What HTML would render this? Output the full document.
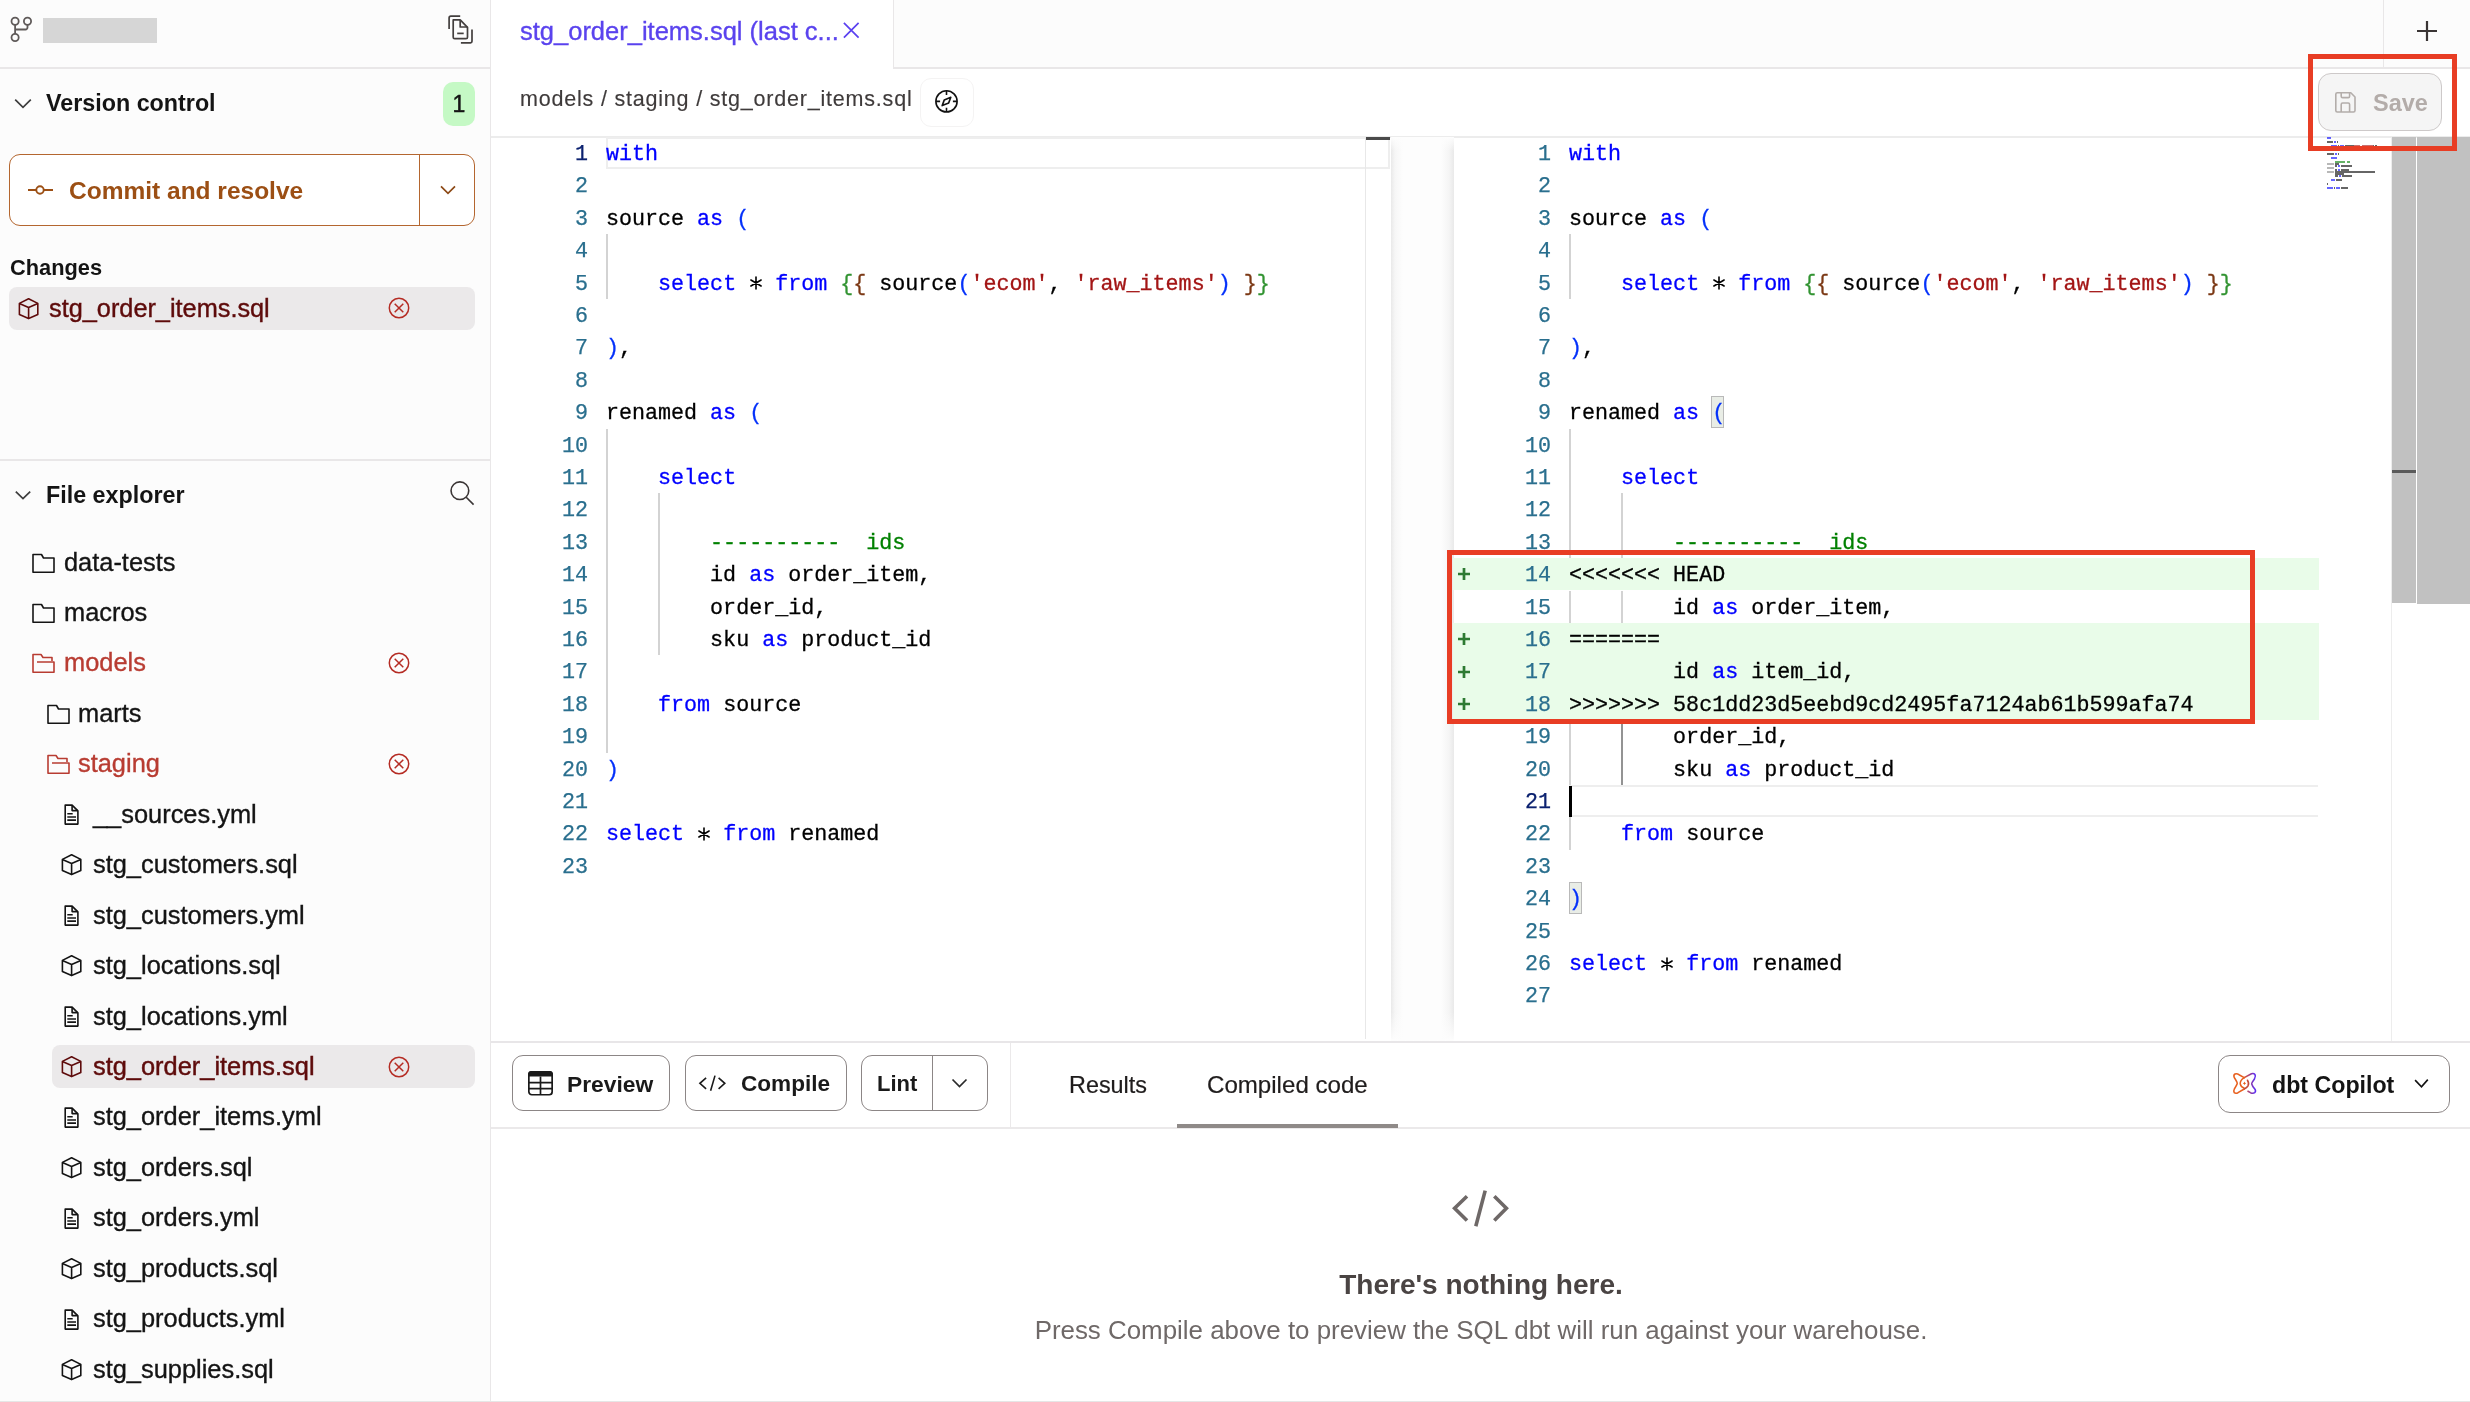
<!DOCTYPE html><html><head><meta charset="utf-8"><style>
html,body{margin:0;padding:0;width:2470px;height:1402px;overflow:hidden;background:#fff;}
.t{position:absolute;white-space:pre;will-change:transform;}
.r{position:absolute;box-sizing:border-box;}
</style></head><body>
<div class="r" style="left:0px;top:0px;width:490px;height:1402px;background:#fcfcfc"></div>
<div class="r" style="left:490px;top:0px;width:1px;height:1402px;background:#e9e7e8"></div>
<svg class="r" style="left:8px;top:14px" width="30" height="32" viewBox="0 0 30 32" fill="none"><g stroke="#5f5a59" stroke-width="1.8"><circle cx="7.1" cy="7.3" r="3.6"/><circle cx="19.5" cy="7.3" r="3.6"/><circle cx="7.1" cy="23.5" r="3.6"/><path d="M7.1 10.9 V19.9 M7.1 15.5 H17.5 Q19.3 15.5 19.5 13.5 V10.9"/></g></svg>
<div class="r" style="left:43px;top:18px;width:114px;height:25px;background:#d6d6d6"></div>
<svg class="r" style="left:440px;top:10px" width="40" height="40" viewBox="0 0 40 40" fill="none"><g stroke="#433f3e" stroke-width="1.7" stroke-linejoin="round" stroke-linecap="butt"><path d="M20.2 6.05 H10.9 Q9.1 6.05 9.1 7.9 V19.1"/><path d="M13.2 9.9 H20.2 L27.5 17.3 V27.2 Q27.5 28.7 26 28.7 H14.7 Q13.2 28.7 13.2 27.2 Z"/><path d="M20.2 9.9 V17 H27.5"/><path d="M17.2 23.4 H23.7"/><path d="M32 19.5 V31.3 Q32 32.8 30.5 32.8 H20.9"/></g></svg>
<div class="r" style="left:0px;top:67px;width:490px;height:1.5px;background:#e9e7e8"></div>
<svg class="r" style="left:13px;top:96px" width="20" height="16" viewBox="0 0 20 16" fill="none"><path d="M2.2 3.7 L10 11.4 L17.8 3.7" stroke="#3d3d3d" stroke-width="1.7" fill="none"/></svg>
<div class="t" style="left:46.00px;top:90.34px;font-size:23.3px;line-height:27.96px;color:#141414;font-weight:bold;font-family:'Liberation Sans', sans-serif;">Version control</div>
<div class="r" style="left:443px;top:82px;width:32px;height:44px;background:#c5f9c5;border-radius:10px"></div>
<div class="t" style="left:-541.00px;width:2000px;text-align:center;top:91.23px;font-size:23px;line-height:27.60px;color:#141414;font-weight:normal;font-family:'Liberation Sans', sans-serif;-webkit-text-stroke:0.5px #141414">1</div>
<div class="r" style="left:9px;top:154px;width:466px;height:72px;background:#fff;border:1.5px solid #b4662f;border-radius:11px"></div>
<div class="r" style="left:419px;top:154px;width:1px;height:72px;background:#b4662f"></div>
<svg class="r" style="left:26px;top:180px" width="30" height="20" viewBox="0 0 30 20" fill="none"><g stroke="#9c4f14" stroke-width="1.9"><path d="M2 10 H10.2 M17.8 10 H27"/><circle cx="14" cy="10" r="3.7"/></g></svg>
<div class="t" style="left:68.50px;top:175.81px;font-size:24.5px;line-height:29.40px;color:#9c4f14;font-weight:bold;font-family:'Liberation Sans', sans-serif;">Commit and resolve</div>
<svg class="r" style="left:437px;top:182px" width="22" height="16" viewBox="0 0 22 16" fill="none"><path d="M4 4.3 L11 11.3 L18 4.3" stroke="#8d4a17" stroke-width="1.7" fill="none"/></svg>
<div class="t" style="left:9.60px;top:255.36px;font-size:21.8px;line-height:26.16px;color:#141414;font-weight:bold;font-family:'Liberation Sans', sans-serif;">Changes</div>
<div class="r" style="left:9px;top:287px;width:466px;height:43px;background:#ebe9ea;border-radius:8px"></div>
<svg class="r" style="left:18px;top:298px" width="22" height="22" viewBox="0 0 22 22" fill="none"><g stroke="#5e0b0b" stroke-width="1.6" stroke-linejoin="round"><path d="M10.6 0.8 L19.8 5.4 V16.6 L10.6 20.6 L1.4 16.6 V5.4 Z"/><path d="M1.4 5.4 L10.6 9.4 L19.8 5.4 M10.6 9.4 V20.6"/></g></svg>
<div class="t" style="left:49.30px;top:293.05px;font-size:25.3px;line-height:30.36px;color:#5e0b0b;font-weight:normal;font-family:'Liberation Sans', sans-serif;-webkit-text-stroke:0.4px #5e0b0b">stg_order_items.sql</div>
<svg class="r" style="left:387.3px;top:296.2px" width="24" height="24" viewBox="0 0 24 24" fill="none"><g stroke="#b52c24" stroke-width="1.5"><circle cx="12" cy="12" r="9.7"/><path d="M7.7 7.7 L16.3 16.3 M16.3 7.7 L7.7 16.3"/></g></svg>
<div class="r" style="left:0px;top:459px;width:490px;height:1.5px;background:#e9e7e8"></div>
<svg class="r" style="left:13px;top:488px" width="20" height="16" viewBox="0 0 20 16" fill="none"><path d="M2.8 3.6 L10 10.6 L17.2 3.6" stroke="#3d3d3d" stroke-width="1.7" fill="none"/></svg>
<div class="t" style="left:46.20px;top:482.34px;font-size:23.3px;line-height:27.96px;color:#141414;font-weight:bold;font-family:'Liberation Sans', sans-serif;">File explorer</div>
<svg class="r" style="left:444px;top:476px" width="34" height="34" viewBox="0 0 34 34" fill="none"><g stroke="#3a3535" stroke-width="1.6"><circle cx="15.9" cy="14.7" r="8.85"/><path d="M22.2 21.2 L29.6 28.6"/></g></svg>
<svg class="r" style="left:31px;top:551.5px" width="25" height="23" viewBox="0 0 25 23" fill="none"><path d="M2 2.5 H10.5 L12.5 6 H23 V20.2 H2 Z" stroke="#141414" stroke-width="1.6" stroke-linejoin="round"/></svg>
<div class="t" style="left:63.80px;top:546.55px;font-size:25.4px;line-height:30.48px;color:#141414;font-weight:normal;font-family:'Liberation Sans', sans-serif;-webkit-text-stroke:0.35px #141414">data-tests</div>
<svg class="r" style="left:31px;top:601.94px" width="25" height="23" viewBox="0 0 25 23" fill="none"><path d="M2 2.5 H10.5 L12.5 6 H23 V20.2 H2 Z" stroke="#141414" stroke-width="1.6" stroke-linejoin="round"/></svg>
<div class="t" style="left:63.80px;top:596.99px;font-size:25.4px;line-height:30.48px;color:#141414;font-weight:normal;font-family:'Liberation Sans', sans-serif;-webkit-text-stroke:0.35px #141414">macros</div>
<svg class="r" style="left:31px;top:652.38px" width="25" height="23" viewBox="0 0 25 23" fill="none"><path d="M6 10 H23 V20.2 H2 V2.5 H10 L12 5.5 H21 V9" stroke="#b83c32" stroke-width="1.6" stroke-linejoin="round"/></svg>
<div class="t" style="left:63.80px;top:647.43px;font-size:25.4px;line-height:30.48px;color:#b83c32;font-weight:normal;font-family:'Liberation Sans', sans-serif;-webkit-text-stroke:0.35px #b83c32">models</div>
<svg class="r" style="left:387.3px;top:651.38px" width="24" height="24" viewBox="0 0 24 24" fill="none"><g stroke="#b52c24" stroke-width="1.5"><circle cx="12" cy="12" r="9.7"/><path d="M7.7 7.7 L16.3 16.3 M16.3 7.7 L7.7 16.3"/></g></svg>
<svg class="r" style="left:46px;top:702.8199999999999px" width="25" height="23" viewBox="0 0 25 23" fill="none"><path d="M2 2.5 H10.5 L12.5 6 H23 V20.2 H2 Z" stroke="#141414" stroke-width="1.6" stroke-linejoin="round"/></svg>
<div class="t" style="left:78.00px;top:697.87px;font-size:25.4px;line-height:30.48px;color:#141414;font-weight:normal;font-family:'Liberation Sans', sans-serif;-webkit-text-stroke:0.35px #141414">marts</div>
<svg class="r" style="left:46px;top:753.26px" width="25" height="23" viewBox="0 0 25 23" fill="none"><path d="M6 10 H23 V20.2 H2 V2.5 H10 L12 5.5 H21 V9" stroke="#b83c32" stroke-width="1.6" stroke-linejoin="round"/></svg>
<div class="t" style="left:78.00px;top:748.31px;font-size:25.4px;line-height:30.48px;color:#b83c32;font-weight:normal;font-family:'Liberation Sans', sans-serif;-webkit-text-stroke:0.35px #b83c32">staging</div>
<svg class="r" style="left:387.3px;top:752.26px" width="24" height="24" viewBox="0 0 24 24" fill="none"><g stroke="#b52c24" stroke-width="1.5"><circle cx="12" cy="12" r="9.7"/><path d="M7.7 7.7 L16.3 16.3 M16.3 7.7 L7.7 16.3"/></g></svg>
<svg class="r" style="left:63px;top:803.1px" width="18" height="23" viewBox="0 0 18 23" fill="none"><g stroke="#141414" stroke-width="1.6" stroke-linejoin="round"><path d="M2.2 2.1 H9.1 L14.9 7.9 V21.1 H2.2 Z"/><path d="M9.1 2.1 V7.6 H14.9"/><path d="M4.3 10.7 H9.7 M4.3 14 H13 M4.3 17.1 H13"/></g></svg>
<div class="t" style="left:92.50px;top:798.75px;font-size:25.4px;line-height:30.48px;color:#141414;font-weight:normal;font-family:'Liberation Sans', sans-serif;-webkit-text-stroke:0.35px #141414">__sources.yml</div>
<svg class="r" style="left:61px;top:854.34px" width="22" height="22" viewBox="0 0 22 22" fill="none"><g stroke="#141414" stroke-width="1.6" stroke-linejoin="round"><path d="M10.6 0.8 L19.8 5.4 V16.6 L10.6 20.6 L1.4 16.6 V5.4 Z"/><path d="M1.4 5.4 L10.6 9.4 L19.8 5.4 M10.6 9.4 V20.6"/></g></svg>
<div class="t" style="left:92.50px;top:849.19px;font-size:25.4px;line-height:30.48px;color:#141414;font-weight:normal;font-family:'Liberation Sans', sans-serif;-webkit-text-stroke:0.35px #141414">stg_customers.sql</div>
<svg class="r" style="left:63px;top:903.9799999999999px" width="18" height="23" viewBox="0 0 18 23" fill="none"><g stroke="#141414" stroke-width="1.6" stroke-linejoin="round"><path d="M2.2 2.1 H9.1 L14.9 7.9 V21.1 H2.2 Z"/><path d="M9.1 2.1 V7.6 H14.9"/><path d="M4.3 10.7 H9.7 M4.3 14 H13 M4.3 17.1 H13"/></g></svg>
<div class="t" style="left:92.50px;top:899.63px;font-size:25.4px;line-height:30.48px;color:#141414;font-weight:normal;font-family:'Liberation Sans', sans-serif;-webkit-text-stroke:0.35px #141414">stg_customers.yml</div>
<svg class="r" style="left:61px;top:955.22px" width="22" height="22" viewBox="0 0 22 22" fill="none"><g stroke="#141414" stroke-width="1.6" stroke-linejoin="round"><path d="M10.6 0.8 L19.8 5.4 V16.6 L10.6 20.6 L1.4 16.6 V5.4 Z"/><path d="M1.4 5.4 L10.6 9.4 L19.8 5.4 M10.6 9.4 V20.6"/></g></svg>
<div class="t" style="left:92.50px;top:950.07px;font-size:25.4px;line-height:30.48px;color:#141414;font-weight:normal;font-family:'Liberation Sans', sans-serif;-webkit-text-stroke:0.35px #141414">stg_locations.sql</div>
<svg class="r" style="left:63px;top:1004.86px" width="18" height="23" viewBox="0 0 18 23" fill="none"><g stroke="#141414" stroke-width="1.6" stroke-linejoin="round"><path d="M2.2 2.1 H9.1 L14.9 7.9 V21.1 H2.2 Z"/><path d="M9.1 2.1 V7.6 H14.9"/><path d="M4.3 10.7 H9.7 M4.3 14 H13 M4.3 17.1 H13"/></g></svg>
<div class="t" style="left:92.50px;top:1000.51px;font-size:25.4px;line-height:30.48px;color:#141414;font-weight:normal;font-family:'Liberation Sans', sans-serif;-webkit-text-stroke:0.35px #141414">stg_locations.yml</div>
<div class="r" style="left:52px;top:1045px;width:423px;height:43px;background:#ebe9ea;border-radius:8px"></div>
<svg class="r" style="left:61px;top:1056.1000000000001px" width="22" height="22" viewBox="0 0 22 22" fill="none"><g stroke="#5e0b0b" stroke-width="1.6" stroke-linejoin="round"><path d="M10.6 0.8 L19.8 5.4 V16.6 L10.6 20.6 L1.4 16.6 V5.4 Z"/><path d="M1.4 5.4 L10.6 9.4 L19.8 5.4 M10.6 9.4 V20.6"/></g></svg>
<div class="t" style="left:92.50px;top:1050.95px;font-size:25.4px;line-height:30.48px;color:#5e0b0b;font-weight:normal;font-family:'Liberation Sans', sans-serif;-webkit-text-stroke:0.45px #5e0b0b">stg_order_items.sql</div>
<svg class="r" style="left:387.3px;top:1054.9px" width="24" height="24" viewBox="0 0 24 24" fill="none"><g stroke="#b52c24" stroke-width="1.5"><circle cx="12" cy="12" r="9.7"/><path d="M7.7 7.7 L16.3 16.3 M16.3 7.7 L7.7 16.3"/></g></svg>
<svg class="r" style="left:63px;top:1105.74px" width="18" height="23" viewBox="0 0 18 23" fill="none"><g stroke="#141414" stroke-width="1.6" stroke-linejoin="round"><path d="M2.2 2.1 H9.1 L14.9 7.9 V21.1 H2.2 Z"/><path d="M9.1 2.1 V7.6 H14.9"/><path d="M4.3 10.7 H9.7 M4.3 14 H13 M4.3 17.1 H13"/></g></svg>
<div class="t" style="left:92.50px;top:1101.39px;font-size:25.4px;line-height:30.48px;color:#141414;font-weight:normal;font-family:'Liberation Sans', sans-serif;-webkit-text-stroke:0.35px #141414">stg_order_items.yml</div>
<svg class="r" style="left:61px;top:1156.98px" width="22" height="22" viewBox="0 0 22 22" fill="none"><g stroke="#141414" stroke-width="1.6" stroke-linejoin="round"><path d="M10.6 0.8 L19.8 5.4 V16.6 L10.6 20.6 L1.4 16.6 V5.4 Z"/><path d="M1.4 5.4 L10.6 9.4 L19.8 5.4 M10.6 9.4 V20.6"/></g></svg>
<div class="t" style="left:92.50px;top:1151.83px;font-size:25.4px;line-height:30.48px;color:#141414;font-weight:normal;font-family:'Liberation Sans', sans-serif;-webkit-text-stroke:0.35px #141414">stg_orders.sql</div>
<svg class="r" style="left:63px;top:1206.6200000000001px" width="18" height="23" viewBox="0 0 18 23" fill="none"><g stroke="#141414" stroke-width="1.6" stroke-linejoin="round"><path d="M2.2 2.1 H9.1 L14.9 7.9 V21.1 H2.2 Z"/><path d="M9.1 2.1 V7.6 H14.9"/><path d="M4.3 10.7 H9.7 M4.3 14 H13 M4.3 17.1 H13"/></g></svg>
<div class="t" style="left:92.50px;top:1202.27px;font-size:25.4px;line-height:30.48px;color:#141414;font-weight:normal;font-family:'Liberation Sans', sans-serif;-webkit-text-stroke:0.35px #141414">stg_orders.yml</div>
<svg class="r" style="left:61px;top:1257.86px" width="22" height="22" viewBox="0 0 22 22" fill="none"><g stroke="#141414" stroke-width="1.6" stroke-linejoin="round"><path d="M10.6 0.8 L19.8 5.4 V16.6 L10.6 20.6 L1.4 16.6 V5.4 Z"/><path d="M1.4 5.4 L10.6 9.4 L19.8 5.4 M10.6 9.4 V20.6"/></g></svg>
<div class="t" style="left:92.50px;top:1252.71px;font-size:25.4px;line-height:30.48px;color:#141414;font-weight:normal;font-family:'Liberation Sans', sans-serif;-webkit-text-stroke:0.35px #141414">stg_products.sql</div>
<svg class="r" style="left:63px;top:1307.5px" width="18" height="23" viewBox="0 0 18 23" fill="none"><g stroke="#141414" stroke-width="1.6" stroke-linejoin="round"><path d="M2.2 2.1 H9.1 L14.9 7.9 V21.1 H2.2 Z"/><path d="M9.1 2.1 V7.6 H14.9"/><path d="M4.3 10.7 H9.7 M4.3 14 H13 M4.3 17.1 H13"/></g></svg>
<div class="t" style="left:92.50px;top:1303.15px;font-size:25.4px;line-height:30.48px;color:#141414;font-weight:normal;font-family:'Liberation Sans', sans-serif;-webkit-text-stroke:0.35px #141414">stg_products.yml</div>
<svg class="r" style="left:61px;top:1358.74px" width="22" height="22" viewBox="0 0 22 22" fill="none"><g stroke="#141414" stroke-width="1.6" stroke-linejoin="round"><path d="M10.6 0.8 L19.8 5.4 V16.6 L10.6 20.6 L1.4 16.6 V5.4 Z"/><path d="M1.4 5.4 L10.6 9.4 L19.8 5.4 M10.6 9.4 V20.6"/></g></svg>
<div class="t" style="left:92.50px;top:1353.59px;font-size:25.4px;line-height:30.48px;color:#141414;font-weight:normal;font-family:'Liberation Sans', sans-serif;-webkit-text-stroke:0.35px #141414">stg_supplies.sql</div>
<div class="r" style="left:491px;top:0px;width:1979px;height:67px;background:#fcfcfc"></div>
<div class="r" style="left:491px;top:0px;width:402px;height:67px;background:#fff"></div>
<div class="r" style="left:893px;top:0px;width:1px;height:67px;background:#e9e7e8"></div>
<div class="r" style="left:893px;top:67px;width:1577px;height:1.5px;background:#e9e7e8"></div>
<div class="r" style="left:2383px;top:0px;width:1px;height:67px;background:#e9e7e8"></div>
<div class="t" style="left:520.00px;top:15.66px;font-size:25.5px;line-height:30.60px;color:#5a43ee;font-weight:normal;font-family:'Liberation Sans', sans-serif;-webkit-text-stroke:0.35px #5a43ee">stg_order_items.sql (last c...</div>
<svg class="r" style="left:840px;top:20px" width="22" height="22" viewBox="0 0 22 22" fill="none"><path d="M3.9 2.9 L18.6 17.6 M18.6 2.9 L3.9 17.6" stroke="#5a40f0" stroke-width="1.7"/></svg>
<svg class="r" style="left:2412px;top:16px" width="30" height="30" viewBox="0 0 30 30" fill="none"><path d="M15 5 V25 M5 15 H25" stroke="#3a3535" stroke-width="2.2"/></svg>
<div class="t" style="left:520.00px;top:87.25px;font-size:21.5px;line-height:25.80px;color:#3f3b3b;font-weight:normal;font-family:'Liberation Sans', sans-serif;letter-spacing:0.8px;-webkit-text-stroke:0.15px #3f3b3b">models / staging / stg_order_items.sql</div>
<div class="r" style="left:920px;top:77.5px;width:54px;height:49px;border:1px solid #f4f3f3;border-radius:11px;background:#fff"></div>
<svg class="r" style="left:932px;top:87px" width="30" height="30" viewBox="0 0 30 30" fill="none"><g stroke="#111" stroke-width="1.6" fill="none"><circle cx="14.5" cy="14.4" r="10.6"/><path d="M14.5 3.8 V8 M14.5 20.8 V25 M3.9 14.4 H8.1 M20.9 14.4 H25.1"/><path d="M18.8 10.3 L16.7 15.9 L10.2 18.6 L12.3 12.9 Z" stroke-linejoin="round"/></g></svg>
<div class="r" style="left:2318px;top:73px;width:124px;height:58px;background:#f5f5f5;border:1.5px solid #cdc9c9;border-radius:13px"></div>
<svg class="r" style="left:2332px;top:88px" width="28" height="28" viewBox="0 0 28 28" fill="none"><g stroke="#b3adaa" stroke-width="1.6" fill="none" stroke-linejoin="round"><path d="M5.3 4.7 H18.8 L23 9 V22.5 Q23 24 21.5 24 H5.3 Q3.8 24 3.8 22.5 V6.2 Q3.8 4.7 5.3 4.7 Z"/><path d="M9.2 4.7 V8.2 Q9.2 9.6 10.6 9.6 H16.2 Q17.6 9.6 17.6 8.2 V4.7"/><path d="M9.2 24 V16.4 Q9.2 15 10.6 15 H16.2 Q17.6 15 17.6 16.4 V24"/></g></svg>
<div class="t" style="left:2372.70px;top:88.75px;font-size:23.5px;line-height:28.20px;color:#b3aca9;font-weight:bold;font-family:'Liberation Sans', sans-serif;">Save</div>
<div class="r" style="left:491px;top:136px;width:1979px;height:2px;background:#ececec"></div>
<div class="r" style="left:606px;top:137px;width:784px;height:32px;border:2px solid #eeeeee"></div>
<div class="r" style="left:606px;top:234.2px;width:2px;height:64.8px;background:#d3d3d3"></div>
<div class="r" style="left:606px;top:428.59999999999997px;width:2px;height:324.0px;background:#d3d3d3"></div>
<div class="r" style="left:658px;top:493.4px;width:2px;height:162.0px;background:#d3d3d3"></div>
<div class="t" style="left:388px;width:200px;text-align:right;top:139.03px;font:21.7px/32.4px 'Liberation Mono', monospace;color:#0b216f;letter-spacing:-0.002px;-webkit-text-stroke:0.25px #0b216f">1</div>
<div class="t" style="left:388px;width:200px;text-align:right;top:171.43px;font:21.7px/32.4px 'Liberation Mono', monospace;color:#2a6f8e;letter-spacing:-0.002px;-webkit-text-stroke:0.25px #2a6f8e">2</div>
<div class="t" style="left:388px;width:200px;text-align:right;top:203.83px;font:21.7px/32.4px 'Liberation Mono', monospace;color:#2a6f8e;letter-spacing:-0.002px;-webkit-text-stroke:0.25px #2a6f8e">3</div>
<div class="t" style="left:388px;width:200px;text-align:right;top:236.23px;font:21.7px/32.4px 'Liberation Mono', monospace;color:#2a6f8e;letter-spacing:-0.002px;-webkit-text-stroke:0.25px #2a6f8e">4</div>
<div class="t" style="left:388px;width:200px;text-align:right;top:268.63px;font:21.7px/32.4px 'Liberation Mono', monospace;color:#2a6f8e;letter-spacing:-0.002px;-webkit-text-stroke:0.25px #2a6f8e">5</div>
<div class="t" style="left:388px;width:200px;text-align:right;top:301.03px;font:21.7px/32.4px 'Liberation Mono', monospace;color:#2a6f8e;letter-spacing:-0.002px;-webkit-text-stroke:0.25px #2a6f8e">6</div>
<div class="t" style="left:388px;width:200px;text-align:right;top:333.43px;font:21.7px/32.4px 'Liberation Mono', monospace;color:#2a6f8e;letter-spacing:-0.002px;-webkit-text-stroke:0.25px #2a6f8e">7</div>
<div class="t" style="left:388px;width:200px;text-align:right;top:365.83px;font:21.7px/32.4px 'Liberation Mono', monospace;color:#2a6f8e;letter-spacing:-0.002px;-webkit-text-stroke:0.25px #2a6f8e">8</div>
<div class="t" style="left:388px;width:200px;text-align:right;top:398.23px;font:21.7px/32.4px 'Liberation Mono', monospace;color:#2a6f8e;letter-spacing:-0.002px;-webkit-text-stroke:0.25px #2a6f8e">9</div>
<div class="t" style="left:388px;width:200px;text-align:right;top:430.63px;font:21.7px/32.4px 'Liberation Mono', monospace;color:#2a6f8e;letter-spacing:-0.002px;-webkit-text-stroke:0.25px #2a6f8e">10</div>
<div class="t" style="left:388px;width:200px;text-align:right;top:463.03px;font:21.7px/32.4px 'Liberation Mono', monospace;color:#2a6f8e;letter-spacing:-0.002px;-webkit-text-stroke:0.25px #2a6f8e">11</div>
<div class="t" style="left:388px;width:200px;text-align:right;top:495.43px;font:21.7px/32.4px 'Liberation Mono', monospace;color:#2a6f8e;letter-spacing:-0.002px;-webkit-text-stroke:0.25px #2a6f8e">12</div>
<div class="t" style="left:388px;width:200px;text-align:right;top:527.83px;font:21.7px/32.4px 'Liberation Mono', monospace;color:#2a6f8e;letter-spacing:-0.002px;-webkit-text-stroke:0.25px #2a6f8e">13</div>
<div class="t" style="left:388px;width:200px;text-align:right;top:560.23px;font:21.7px/32.4px 'Liberation Mono', monospace;color:#2a6f8e;letter-spacing:-0.002px;-webkit-text-stroke:0.25px #2a6f8e">14</div>
<div class="t" style="left:388px;width:200px;text-align:right;top:592.63px;font:21.7px/32.4px 'Liberation Mono', monospace;color:#2a6f8e;letter-spacing:-0.002px;-webkit-text-stroke:0.25px #2a6f8e">15</div>
<div class="t" style="left:388px;width:200px;text-align:right;top:625.03px;font:21.7px/32.4px 'Liberation Mono', monospace;color:#2a6f8e;letter-spacing:-0.002px;-webkit-text-stroke:0.25px #2a6f8e">16</div>
<div class="t" style="left:388px;width:200px;text-align:right;top:657.43px;font:21.7px/32.4px 'Liberation Mono', monospace;color:#2a6f8e;letter-spacing:-0.002px;-webkit-text-stroke:0.25px #2a6f8e">17</div>
<div class="t" style="left:388px;width:200px;text-align:right;top:689.83px;font:21.7px/32.4px 'Liberation Mono', monospace;color:#2a6f8e;letter-spacing:-0.002px;-webkit-text-stroke:0.25px #2a6f8e">18</div>
<div class="t" style="left:388px;width:200px;text-align:right;top:722.23px;font:21.7px/32.4px 'Liberation Mono', monospace;color:#2a6f8e;letter-spacing:-0.002px;-webkit-text-stroke:0.25px #2a6f8e">19</div>
<div class="t" style="left:388px;width:200px;text-align:right;top:754.63px;font:21.7px/32.4px 'Liberation Mono', monospace;color:#2a6f8e;letter-spacing:-0.002px;-webkit-text-stroke:0.25px #2a6f8e">20</div>
<div class="t" style="left:388px;width:200px;text-align:right;top:787.03px;font:21.7px/32.4px 'Liberation Mono', monospace;color:#2a6f8e;letter-spacing:-0.002px;-webkit-text-stroke:0.25px #2a6f8e">21</div>
<div class="t" style="left:388px;width:200px;text-align:right;top:819.43px;font:21.7px/32.4px 'Liberation Mono', monospace;color:#2a6f8e;letter-spacing:-0.002px;-webkit-text-stroke:0.25px #2a6f8e">22</div>
<div class="t" style="left:388px;width:200px;text-align:right;top:851.83px;font:21.7px/32.4px 'Liberation Mono', monospace;color:#2a6f8e;letter-spacing:-0.002px;-webkit-text-stroke:0.25px #2a6f8e">23</div>
<div class="t" style="left:606px;top:139.03px;font:21.7px/32.4px 'Liberation Mono', monospace;letter-spacing:-0.002px;-webkit-text-stroke:0.3px currentColor"><span style="color:#0000ff;-webkit-text-stroke:0.3px #0000ff">with</span></div>
<div class="t" style="left:606px;top:203.83px;font:21.7px/32.4px 'Liberation Mono', monospace;letter-spacing:-0.002px;-webkit-text-stroke:0.3px currentColor"><span style="color:#000000;-webkit-text-stroke:0.3px #000000">source </span><span style="color:#0000ff;-webkit-text-stroke:0.3px #0000ff">as</span><span style="color:#000000;-webkit-text-stroke:0.3px #000000"> </span><span style="color:#0431fa;-webkit-text-stroke:0.3px #0431fa">(</span></div>
<svg class="r" style="left:747.73px;top:275.10px" width="16" height="16" viewBox="0 0 16 16"><path d="M8 2 V14 M2.9 5 L13.1 11 M2.9 11 L13.1 5" stroke="#000" stroke-width="1.6" stroke-linecap="round"/></svg>
<div class="t" style="left:606px;top:268.63px;font:21.7px/32.4px 'Liberation Mono', monospace;letter-spacing:-0.002px;-webkit-text-stroke:0.3px currentColor"><span style="color:#000000;-webkit-text-stroke:0.3px #000000">    </span><span style="color:#0000ff;-webkit-text-stroke:0.3px #0000ff">select</span><span style="color:#000000;-webkit-text-stroke:0.3px #000000">   </span><span style="color:#0000ff;-webkit-text-stroke:0.3px #0000ff">from</span><span style="color:#000000;-webkit-text-stroke:0.3px #000000"> </span><span style="color:#319331;-webkit-text-stroke:0.3px #319331">{</span><span style="color:#7b3814;-webkit-text-stroke:0.3px #7b3814">{</span><span style="color:#000000;-webkit-text-stroke:0.3px #000000"> source</span><span style="color:#0431fa;-webkit-text-stroke:0.3px #0431fa">(</span><span style="color:#a31515;-webkit-text-stroke:0.3px #a31515">&#x27;ecom&#x27;</span><span style="color:#000000;-webkit-text-stroke:0.3px #000000">, </span><span style="color:#a31515;-webkit-text-stroke:0.3px #a31515">&#x27;raw_items&#x27;</span><span style="color:#0431fa;-webkit-text-stroke:0.3px #0431fa">)</span><span style="color:#000000;-webkit-text-stroke:0.3px #000000"> </span><span style="color:#7b3814;-webkit-text-stroke:0.3px #7b3814">}</span><span style="color:#319331;-webkit-text-stroke:0.3px #319331">}</span></div>
<div class="t" style="left:606px;top:333.43px;font:21.7px/32.4px 'Liberation Mono', monospace;letter-spacing:-0.002px;-webkit-text-stroke:0.3px currentColor"><span style="color:#0431fa;-webkit-text-stroke:0.3px #0431fa">)</span><span style="color:#000000;-webkit-text-stroke:0.3px #000000">,</span></div>
<div class="t" style="left:606px;top:398.23px;font:21.7px/32.4px 'Liberation Mono', monospace;letter-spacing:-0.002px;-webkit-text-stroke:0.3px currentColor"><span style="color:#000000;-webkit-text-stroke:0.3px #000000">renamed </span><span style="color:#0000ff;-webkit-text-stroke:0.3px #0000ff">as</span><span style="color:#000000;-webkit-text-stroke:0.3px #000000"> </span><span style="color:#0431fa;-webkit-text-stroke:0.3px #0431fa">(</span></div>
<div class="t" style="left:606px;top:463.03px;font:21.7px/32.4px 'Liberation Mono', monospace;letter-spacing:-0.002px;-webkit-text-stroke:0.3px currentColor"><span style="color:#000000;-webkit-text-stroke:0.3px #000000">    </span><span style="color:#0000ff;-webkit-text-stroke:0.3px #0000ff">select</span></div>
<div class="t" style="left:606px;top:527.83px;font:21.7px/32.4px 'Liberation Mono', monospace;letter-spacing:-0.002px;-webkit-text-stroke:0.3px currentColor"><span style="color:#000000;-webkit-text-stroke:0.3px #000000">        </span><span style="color:#008000;-webkit-text-stroke:0.3px #008000">----------  ids</span></div>
<div class="t" style="left:606px;top:560.23px;font:21.7px/32.4px 'Liberation Mono', monospace;letter-spacing:-0.002px;-webkit-text-stroke:0.3px currentColor"><span style="color:#000000;-webkit-text-stroke:0.3px #000000">        id </span><span style="color:#0000ff;-webkit-text-stroke:0.3px #0000ff">as</span><span style="color:#000000;-webkit-text-stroke:0.3px #000000"> order_item,</span></div>
<div class="t" style="left:606px;top:592.63px;font:21.7px/32.4px 'Liberation Mono', monospace;letter-spacing:-0.002px;-webkit-text-stroke:0.3px currentColor"><span style="color:#000000;-webkit-text-stroke:0.3px #000000">        order_id,</span></div>
<div class="t" style="left:606px;top:625.03px;font:21.7px/32.4px 'Liberation Mono', monospace;letter-spacing:-0.002px;-webkit-text-stroke:0.3px currentColor"><span style="color:#000000;-webkit-text-stroke:0.3px #000000">        sku </span><span style="color:#0000ff;-webkit-text-stroke:0.3px #0000ff">as</span><span style="color:#000000;-webkit-text-stroke:0.3px #000000"> product_id</span></div>
<div class="t" style="left:606px;top:689.83px;font:21.7px/32.4px 'Liberation Mono', monospace;letter-spacing:-0.002px;-webkit-text-stroke:0.3px currentColor"><span style="color:#000000;-webkit-text-stroke:0.3px #000000">    </span><span style="color:#0000ff;-webkit-text-stroke:0.3px #0000ff">from</span><span style="color:#000000;-webkit-text-stroke:0.3px #000000"> source</span></div>
<div class="t" style="left:606px;top:754.63px;font:21.7px/32.4px 'Liberation Mono', monospace;letter-spacing:-0.002px;-webkit-text-stroke:0.3px currentColor"><span style="color:#0431fa;-webkit-text-stroke:0.3px #0431fa">)</span></div>
<svg class="r" style="left:695.65px;top:825.90px" width="16" height="16" viewBox="0 0 16 16"><path d="M8 2 V14 M2.9 5 L13.1 11 M2.9 11 L13.1 5" stroke="#000" stroke-width="1.6" stroke-linecap="round"/></svg>
<div class="t" style="left:606px;top:819.43px;font:21.7px/32.4px 'Liberation Mono', monospace;letter-spacing:-0.002px;-webkit-text-stroke:0.3px currentColor"><span style="color:#0000ff;-webkit-text-stroke:0.3px #0000ff">select</span><span style="color:#000000;-webkit-text-stroke:0.3px #000000">   </span><span style="color:#0000ff;-webkit-text-stroke:0.3px #0000ff">from</span><span style="color:#000000;-webkit-text-stroke:0.3px #000000"> renamed</span></div>
<div class="r" style="left:1365px;top:137px;width:1px;height:902px;background:#e8e8e8"></div>
<div class="r" style="left:1366px;top:137px;width:24px;height:3px;background:#4a4a4a"></div>
<div class="r" style="left:1391px;top:137px;width:63px;height:902px;background:linear-gradient(to right,#e9e9e9 0px,#f6f6f6 4px,#fdfdfd 12px,#fdfdfd 50px,#f5f5f5 58px,#e9e9e9 63px)"></div>
<div class="r" style="left:1391px;top:1012px;width:63px;height:29px;background:linear-gradient(to bottom,rgba(253,253,253,0),#fdfdfd)"></div>
<div class="r" style="left:1391px;top:137px;width:63px;height:14px;background:linear-gradient(to top,rgba(253,253,253,0),#fdfdfd)"></div>
<div class="r" style="left:1453px;top:558px;width:866px;height:32.4px;background:#e9fce9"></div>
<div class="r" style="left:1453px;top:623px;width:866px;height:33px;background:#e9fce9"></div>
<div class="r" style="left:1453px;top:655px;width:866px;height:33px;background:#e9fce9"></div>
<div class="r" style="left:1453px;top:688px;width:866px;height:32.4px;background:#e9fce9"></div>
<svg class="r" style="left:1456px;top:566.3000000000001px" width="16" height="16" viewBox="0 0 16 16" fill="none"><path d="M8 2 V14 M2 8 H14" stroke="#2d7a32" stroke-width="2.7"/></svg>
<svg class="r" style="left:1456px;top:631.1px" width="16" height="16" viewBox="0 0 16 16" fill="none"><path d="M8 2 V14 M2 8 H14" stroke="#2d7a32" stroke-width="2.7"/></svg>
<svg class="r" style="left:1456px;top:663.5px" width="16" height="16" viewBox="0 0 16 16" fill="none"><path d="M8 2 V14 M2 8 H14" stroke="#2d7a32" stroke-width="2.7"/></svg>
<svg class="r" style="left:1456px;top:695.9px" width="16" height="16" viewBox="0 0 16 16" fill="none"><path d="M8 2 V14 M2 8 H14" stroke="#2d7a32" stroke-width="2.7"/></svg>
<div class="r" style="left:1569px;top:234.2px;width:2px;height:64.8px;background:#d3d3d3"></div>
<div class="r" style="left:1569px;top:428.59999999999997px;width:2px;height:129.6px;background:#d3d3d3"></div>
<div class="r" style="left:1569px;top:590.5999999999999px;width:2px;height:32.4px;background:#d3d3d3"></div>
<div class="r" style="left:1569px;top:720.1999999999999px;width:2px;height:129.6px;background:#d3d3d3"></div>
<div class="r" style="left:1621px;top:493.4px;width:2px;height:64.8px;background:#d3d3d3"></div>
<div class="r" style="left:1621px;top:590.5999999999999px;width:2px;height:32.4px;background:#d3d3d3"></div>
<div class="r" style="left:1621px;top:720.1999999999999px;width:2px;height:64.8px;background:#939393"></div>
<div class="r" style="left:1569px;top:785.0px;width:749px;height:32.4px;border:2px solid #eeeeee;border-right:0"></div>
<div class="r" style="left:1569px;top:786.0px;width:3px;height:31px;background:#000"></div>
<div class="r" style="left:1711.1200000000001px;top:396.2px;width:12.6px;height:32.3px;background:#e9ede6;border:1px solid #b9b9b9"></div>
<div class="r" style="left:1569.3px;top:882.1999999999999px;width:12.6px;height:32.3px;background:#e9ede6;border:1px solid #b9b9b9"></div>
<div class="t" style="left:1351px;width:200px;text-align:right;top:139.03px;font:21.7px/32.4px 'Liberation Mono', monospace;color:#2a6f8e;letter-spacing:-0.002px;-webkit-text-stroke:0.25px #2a6f8e">1</div>
<div class="t" style="left:1351px;width:200px;text-align:right;top:171.43px;font:21.7px/32.4px 'Liberation Mono', monospace;color:#2a6f8e;letter-spacing:-0.002px;-webkit-text-stroke:0.25px #2a6f8e">2</div>
<div class="t" style="left:1351px;width:200px;text-align:right;top:203.83px;font:21.7px/32.4px 'Liberation Mono', monospace;color:#2a6f8e;letter-spacing:-0.002px;-webkit-text-stroke:0.25px #2a6f8e">3</div>
<div class="t" style="left:1351px;width:200px;text-align:right;top:236.23px;font:21.7px/32.4px 'Liberation Mono', monospace;color:#2a6f8e;letter-spacing:-0.002px;-webkit-text-stroke:0.25px #2a6f8e">4</div>
<div class="t" style="left:1351px;width:200px;text-align:right;top:268.63px;font:21.7px/32.4px 'Liberation Mono', monospace;color:#2a6f8e;letter-spacing:-0.002px;-webkit-text-stroke:0.25px #2a6f8e">5</div>
<div class="t" style="left:1351px;width:200px;text-align:right;top:301.03px;font:21.7px/32.4px 'Liberation Mono', monospace;color:#2a6f8e;letter-spacing:-0.002px;-webkit-text-stroke:0.25px #2a6f8e">6</div>
<div class="t" style="left:1351px;width:200px;text-align:right;top:333.43px;font:21.7px/32.4px 'Liberation Mono', monospace;color:#2a6f8e;letter-spacing:-0.002px;-webkit-text-stroke:0.25px #2a6f8e">7</div>
<div class="t" style="left:1351px;width:200px;text-align:right;top:365.83px;font:21.7px/32.4px 'Liberation Mono', monospace;color:#2a6f8e;letter-spacing:-0.002px;-webkit-text-stroke:0.25px #2a6f8e">8</div>
<div class="t" style="left:1351px;width:200px;text-align:right;top:398.23px;font:21.7px/32.4px 'Liberation Mono', monospace;color:#2a6f8e;letter-spacing:-0.002px;-webkit-text-stroke:0.25px #2a6f8e">9</div>
<div class="t" style="left:1351px;width:200px;text-align:right;top:430.63px;font:21.7px/32.4px 'Liberation Mono', monospace;color:#2a6f8e;letter-spacing:-0.002px;-webkit-text-stroke:0.25px #2a6f8e">10</div>
<div class="t" style="left:1351px;width:200px;text-align:right;top:463.03px;font:21.7px/32.4px 'Liberation Mono', monospace;color:#2a6f8e;letter-spacing:-0.002px;-webkit-text-stroke:0.25px #2a6f8e">11</div>
<div class="t" style="left:1351px;width:200px;text-align:right;top:495.43px;font:21.7px/32.4px 'Liberation Mono', monospace;color:#2a6f8e;letter-spacing:-0.002px;-webkit-text-stroke:0.25px #2a6f8e">12</div>
<div class="t" style="left:1351px;width:200px;text-align:right;top:527.83px;font:21.7px/32.4px 'Liberation Mono', monospace;color:#2a6f8e;letter-spacing:-0.002px;-webkit-text-stroke:0.25px #2a6f8e">13</div>
<div class="t" style="left:1351px;width:200px;text-align:right;top:560.23px;font:21.7px/32.4px 'Liberation Mono', monospace;color:#2a6f8e;letter-spacing:-0.002px;-webkit-text-stroke:0.25px #2a6f8e">14</div>
<div class="t" style="left:1351px;width:200px;text-align:right;top:592.63px;font:21.7px/32.4px 'Liberation Mono', monospace;color:#2a6f8e;letter-spacing:-0.002px;-webkit-text-stroke:0.25px #2a6f8e">15</div>
<div class="t" style="left:1351px;width:200px;text-align:right;top:625.03px;font:21.7px/32.4px 'Liberation Mono', monospace;color:#2a6f8e;letter-spacing:-0.002px;-webkit-text-stroke:0.25px #2a6f8e">16</div>
<div class="t" style="left:1351px;width:200px;text-align:right;top:657.43px;font:21.7px/32.4px 'Liberation Mono', monospace;color:#2a6f8e;letter-spacing:-0.002px;-webkit-text-stroke:0.25px #2a6f8e">17</div>
<div class="t" style="left:1351px;width:200px;text-align:right;top:689.83px;font:21.7px/32.4px 'Liberation Mono', monospace;color:#2a6f8e;letter-spacing:-0.002px;-webkit-text-stroke:0.25px #2a6f8e">18</div>
<div class="t" style="left:1351px;width:200px;text-align:right;top:722.23px;font:21.7px/32.4px 'Liberation Mono', monospace;color:#2a6f8e;letter-spacing:-0.002px;-webkit-text-stroke:0.25px #2a6f8e">19</div>
<div class="t" style="left:1351px;width:200px;text-align:right;top:754.63px;font:21.7px/32.4px 'Liberation Mono', monospace;color:#2a6f8e;letter-spacing:-0.002px;-webkit-text-stroke:0.25px #2a6f8e">20</div>
<div class="t" style="left:1351px;width:200px;text-align:right;top:787.03px;font:21.7px/32.4px 'Liberation Mono', monospace;color:#0b216f;letter-spacing:-0.002px;-webkit-text-stroke:0.25px #0b216f">21</div>
<div class="t" style="left:1351px;width:200px;text-align:right;top:819.43px;font:21.7px/32.4px 'Liberation Mono', monospace;color:#2a6f8e;letter-spacing:-0.002px;-webkit-text-stroke:0.25px #2a6f8e">22</div>
<div class="t" style="left:1351px;width:200px;text-align:right;top:851.83px;font:21.7px/32.4px 'Liberation Mono', monospace;color:#2a6f8e;letter-spacing:-0.002px;-webkit-text-stroke:0.25px #2a6f8e">23</div>
<div class="t" style="left:1351px;width:200px;text-align:right;top:884.23px;font:21.7px/32.4px 'Liberation Mono', monospace;color:#2a6f8e;letter-spacing:-0.002px;-webkit-text-stroke:0.25px #2a6f8e">24</div>
<div class="t" style="left:1351px;width:200px;text-align:right;top:916.63px;font:21.7px/32.4px 'Liberation Mono', monospace;color:#2a6f8e;letter-spacing:-0.002px;-webkit-text-stroke:0.25px #2a6f8e">25</div>
<div class="t" style="left:1351px;width:200px;text-align:right;top:949.03px;font:21.7px/32.4px 'Liberation Mono', monospace;color:#2a6f8e;letter-spacing:-0.002px;-webkit-text-stroke:0.25px #2a6f8e">26</div>
<div class="t" style="left:1351px;width:200px;text-align:right;top:981.43px;font:21.7px/32.4px 'Liberation Mono', monospace;color:#2a6f8e;letter-spacing:-0.002px;-webkit-text-stroke:0.25px #2a6f8e">27</div>
<div class="t" style="left:1569px;top:139.03px;font:21.7px/32.4px 'Liberation Mono', monospace;letter-spacing:-0.002px;-webkit-text-stroke:0.3px currentColor"><span style="color:#0000ff;-webkit-text-stroke:0.3px #0000ff">with</span></div>
<div class="t" style="left:1569px;top:203.83px;font:21.7px/32.4px 'Liberation Mono', monospace;letter-spacing:-0.002px;-webkit-text-stroke:0.3px currentColor"><span style="color:#000000;-webkit-text-stroke:0.3px #000000">source </span><span style="color:#0000ff;-webkit-text-stroke:0.3px #0000ff">as</span><span style="color:#000000;-webkit-text-stroke:0.3px #000000"> </span><span style="color:#0431fa;-webkit-text-stroke:0.3px #0431fa">(</span></div>
<svg class="r" style="left:1710.73px;top:275.10px" width="16" height="16" viewBox="0 0 16 16"><path d="M8 2 V14 M2.9 5 L13.1 11 M2.9 11 L13.1 5" stroke="#000" stroke-width="1.6" stroke-linecap="round"/></svg>
<div class="t" style="left:1569px;top:268.63px;font:21.7px/32.4px 'Liberation Mono', monospace;letter-spacing:-0.002px;-webkit-text-stroke:0.3px currentColor"><span style="color:#000000;-webkit-text-stroke:0.3px #000000">    </span><span style="color:#0000ff;-webkit-text-stroke:0.3px #0000ff">select</span><span style="color:#000000;-webkit-text-stroke:0.3px #000000">   </span><span style="color:#0000ff;-webkit-text-stroke:0.3px #0000ff">from</span><span style="color:#000000;-webkit-text-stroke:0.3px #000000"> </span><span style="color:#319331;-webkit-text-stroke:0.3px #319331">{</span><span style="color:#7b3814;-webkit-text-stroke:0.3px #7b3814">{</span><span style="color:#000000;-webkit-text-stroke:0.3px #000000"> source</span><span style="color:#0431fa;-webkit-text-stroke:0.3px #0431fa">(</span><span style="color:#a31515;-webkit-text-stroke:0.3px #a31515">&#x27;ecom&#x27;</span><span style="color:#000000;-webkit-text-stroke:0.3px #000000">, </span><span style="color:#a31515;-webkit-text-stroke:0.3px #a31515">&#x27;raw_items&#x27;</span><span style="color:#0431fa;-webkit-text-stroke:0.3px #0431fa">)</span><span style="color:#000000;-webkit-text-stroke:0.3px #000000"> </span><span style="color:#7b3814;-webkit-text-stroke:0.3px #7b3814">}</span><span style="color:#319331;-webkit-text-stroke:0.3px #319331">}</span></div>
<div class="t" style="left:1569px;top:333.43px;font:21.7px/32.4px 'Liberation Mono', monospace;letter-spacing:-0.002px;-webkit-text-stroke:0.3px currentColor"><span style="color:#0431fa;-webkit-text-stroke:0.3px #0431fa">)</span><span style="color:#000000;-webkit-text-stroke:0.3px #000000">,</span></div>
<div class="t" style="left:1569px;top:398.23px;font:21.7px/32.4px 'Liberation Mono', monospace;letter-spacing:-0.002px;-webkit-text-stroke:0.3px currentColor"><span style="color:#000000;-webkit-text-stroke:0.3px #000000">renamed </span><span style="color:#0000ff;-webkit-text-stroke:0.3px #0000ff">as</span><span style="color:#000000;-webkit-text-stroke:0.3px #000000"> </span><span style="color:#0431fa;-webkit-text-stroke:0.3px #0431fa">(</span></div>
<div class="t" style="left:1569px;top:463.03px;font:21.7px/32.4px 'Liberation Mono', monospace;letter-spacing:-0.002px;-webkit-text-stroke:0.3px currentColor"><span style="color:#000000;-webkit-text-stroke:0.3px #000000">    </span><span style="color:#0000ff;-webkit-text-stroke:0.3px #0000ff">select</span></div>
<div class="t" style="left:1569px;top:527.83px;font:21.7px/32.4px 'Liberation Mono', monospace;letter-spacing:-0.002px;-webkit-text-stroke:0.3px currentColor"><span style="color:#000000;-webkit-text-stroke:0.3px #000000">        </span><span style="color:#008000;-webkit-text-stroke:0.3px #008000">----------  ids</span></div>
<div class="t" style="left:1569px;top:560.23px;font:21.7px/32.4px 'Liberation Mono', monospace;letter-spacing:-0.002px;-webkit-text-stroke:0.3px currentColor"><span style="color:#000000;-webkit-text-stroke:0.3px #000000">&lt;&lt;&lt;&lt;&lt;&lt;&lt; HEAD</span></div>
<div class="t" style="left:1569px;top:592.63px;font:21.7px/32.4px 'Liberation Mono', monospace;letter-spacing:-0.002px;-webkit-text-stroke:0.3px currentColor"><span style="color:#000000;-webkit-text-stroke:0.3px #000000">        id </span><span style="color:#0000ff;-webkit-text-stroke:0.3px #0000ff">as</span><span style="color:#000000;-webkit-text-stroke:0.3px #000000"> order_item,</span></div>
<div class="t" style="left:1569px;top:625.03px;font:21.7px/32.4px 'Liberation Mono', monospace;letter-spacing:-0.002px;-webkit-text-stroke:0.3px currentColor"><span style="color:#000000;-webkit-text-stroke:0.3px #000000">=======</span></div>
<div class="t" style="left:1569px;top:657.43px;font:21.7px/32.4px 'Liberation Mono', monospace;letter-spacing:-0.002px;-webkit-text-stroke:0.3px currentColor"><span style="color:#000000;-webkit-text-stroke:0.3px #000000">        id </span><span style="color:#0000ff;-webkit-text-stroke:0.3px #0000ff">as</span><span style="color:#000000;-webkit-text-stroke:0.3px #000000"> item_id,</span></div>
<div class="t" style="left:1569px;top:689.83px;font:21.7px/32.4px 'Liberation Mono', monospace;letter-spacing:-0.002px;-webkit-text-stroke:0.3px currentColor"><span style="color:#000000;-webkit-text-stroke:0.3px #000000">&gt;&gt;&gt;&gt;&gt;&gt;&gt; 58c1dd23d5eebd9cd2495fa7124ab61b599afa74</span></div>
<div class="t" style="left:1569px;top:722.23px;font:21.7px/32.4px 'Liberation Mono', monospace;letter-spacing:-0.002px;-webkit-text-stroke:0.3px currentColor"><span style="color:#000000;-webkit-text-stroke:0.3px #000000">        order_id,</span></div>
<div class="t" style="left:1569px;top:754.63px;font:21.7px/32.4px 'Liberation Mono', monospace;letter-spacing:-0.002px;-webkit-text-stroke:0.3px currentColor"><span style="color:#000000;-webkit-text-stroke:0.3px #000000">        sku </span><span style="color:#0000ff;-webkit-text-stroke:0.3px #0000ff">as</span><span style="color:#000000;-webkit-text-stroke:0.3px #000000"> product_id</span></div>
<div class="t" style="left:1569px;top:819.43px;font:21.7px/32.4px 'Liberation Mono', monospace;letter-spacing:-0.002px;-webkit-text-stroke:0.3px currentColor"><span style="color:#000000;-webkit-text-stroke:0.3px #000000">    </span><span style="color:#0000ff;-webkit-text-stroke:0.3px #0000ff">from</span><span style="color:#000000;-webkit-text-stroke:0.3px #000000"> source</span></div>
<div class="t" style="left:1569px;top:884.23px;font:21.7px/32.4px 'Liberation Mono', monospace;letter-spacing:-0.002px;-webkit-text-stroke:0.3px currentColor"><span style="color:#0431fa;-webkit-text-stroke:0.3px #0431fa">)</span></div>
<svg class="r" style="left:1658.65px;top:955.50px" width="16" height="16" viewBox="0 0 16 16"><path d="M8 2 V14 M2.9 5 L13.1 11 M2.9 11 L13.1 5" stroke="#000" stroke-width="1.6" stroke-linecap="round"/></svg>
<div class="t" style="left:1569px;top:949.03px;font:21.7px/32.4px 'Liberation Mono', monospace;letter-spacing:-0.002px;-webkit-text-stroke:0.3px currentColor"><span style="color:#0000ff;-webkit-text-stroke:0.3px #0000ff">select</span><span style="color:#000000;-webkit-text-stroke:0.3px #000000">   </span><span style="color:#0000ff;-webkit-text-stroke:0.3px #0000ff">from</span><span style="color:#000000;-webkit-text-stroke:0.3px #000000"> renamed</span></div>
<div class="r" style="left:2391px;top:137px;width:25px;height:466px;background:#c1c1c1"></div>
<div class="r" style="left:2417px;top:137px;width:53px;height:467px;background:#c1c1c1"></div>
<div class="r" style="left:2391px;top:470px;width:25px;height:3px;background:#5a5a5a"></div>
<div class="r" style="left:2391px;top:137px;width:1px;height:904px;background:#ededed"></div>
<div class="r" style="left:2327.0px;top:137.2px;width:4.0px;height:1.4px;background:#0000ff;opacity:0.6"></div>
<div class="r" style="left:2327.0px;top:141.2px;width:6.0px;height:1.4px;background:#000000;opacity:0.6"></div>
<div class="r" style="left:2334.0px;top:141.2px;width:2.0px;height:1.4px;background:#0000ff;opacity:0.6"></div>
<div class="r" style="left:2337.0px;top:141.2px;width:1.0px;height:1.4px;background:#000000;opacity:0.6"></div>
<div class="r" style="left:2331.0px;top:145.2px;width:6.0px;height:1.4px;background:#0000ff;opacity:0.6"></div>
<div class="r" style="left:2338.0px;top:145.2px;width:1.0px;height:1.4px;background:#000000;opacity:0.6"></div>
<div class="r" style="left:2340.0px;top:145.2px;width:4.0px;height:1.4px;background:#0000ff;opacity:0.6"></div>
<div class="r" style="left:2345.0px;top:145.2px;width:9.0px;height:1.4px;background:#000000;opacity:0.6"></div>
<div class="r" style="left:2354.0px;top:145.2px;width:6.0px;height:1.4px;background:#a31515;opacity:0.6"></div>
<div class="r" style="left:2362.0px;top:145.2px;width:11.0px;height:1.4px;background:#a31515;opacity:0.6"></div>
<div class="r" style="left:2373.0px;top:145.2px;width:1.0px;height:1.4px;background:#000000;opacity:0.6"></div>
<div class="r" style="left:2375.0px;top:145.2px;width:2.0px;height:1.4px;background:#000000;opacity:0.6"></div>
<div class="r" style="left:2327.0px;top:153.2px;width:7.0px;height:1.4px;background:#000000;opacity:0.6"></div>
<div class="r" style="left:2335.0px;top:153.2px;width:2.0px;height:1.4px;background:#0000ff;opacity:0.6"></div>
<div class="r" style="left:2338.0px;top:153.2px;width:1.0px;height:1.4px;background:#000000;opacity:0.6"></div>
<div class="r" style="left:2331.0px;top:157.2px;width:6.0px;height:1.4px;background:#0000ff;opacity:0.6"></div>
<div class="r" style="left:2335.0px;top:161.2px;width:10.0px;height:1.4px;background:#008000;opacity:0.6"></div>
<div class="r" style="left:2347.0px;top:161.2px;width:3.0px;height:1.4px;background:#008000;opacity:0.6"></div>
<div class="r" style="left:2327.0px;top:163.2px;width:7.0px;height:1.4px;background:#888;opacity:0.6"></div>
<div class="r" style="left:2335.0px;top:163.2px;width:4.0px;height:1.4px;background:#000000;opacity:0.6"></div>
<div class="r" style="left:2335.0px;top:165.2px;width:2.0px;height:1.4px;background:#000000;opacity:0.6"></div>
<div class="r" style="left:2338.0px;top:165.2px;width:2.0px;height:1.4px;background:#0000ff;opacity:0.6"></div>
<div class="r" style="left:2341.0px;top:165.2px;width:11.0px;height:1.4px;background:#000000;opacity:0.6"></div>
<div class="r" style="left:2327.0px;top:167.2px;width:7.0px;height:1.4px;background:#888;opacity:0.6"></div>
<div class="r" style="left:2335.0px;top:169.2px;width:2.0px;height:1.4px;background:#000000;opacity:0.6"></div>
<div class="r" style="left:2338.0px;top:169.2px;width:2.0px;height:1.4px;background:#0000ff;opacity:0.6"></div>
<div class="r" style="left:2341.0px;top:169.2px;width:8.0px;height:1.4px;background:#000000;opacity:0.6"></div>
<div class="r" style="left:2327.0px;top:171.2px;width:7.0px;height:1.4px;background:#888;opacity:0.6"></div>
<div class="r" style="left:2335.0px;top:171.2px;width:40.0px;height:1.4px;background:#000000;opacity:0.6"></div>
<div class="r" style="left:2335.0px;top:173.2px;width:9.0px;height:1.4px;background:#000000;opacity:0.6"></div>
<div class="r" style="left:2335.0px;top:175.2px;width:3.0px;height:1.4px;background:#000000;opacity:0.6"></div>
<div class="r" style="left:2339.0px;top:175.2px;width:2.0px;height:1.4px;background:#0000ff;opacity:0.6"></div>
<div class="r" style="left:2342.0px;top:175.2px;width:10.0px;height:1.4px;background:#000000;opacity:0.6"></div>
<div class="r" style="left:2331.0px;top:179.2px;width:4.0px;height:1.4px;background:#0000ff;opacity:0.6"></div>
<div class="r" style="left:2336.0px;top:179.2px;width:6.0px;height:1.4px;background:#000000;opacity:0.6"></div>
<div class="r" style="left:2327.0px;top:183.2px;width:1.0px;height:1.4px;background:#000000;opacity:0.6"></div>
<div class="r" style="left:2327.0px;top:187.2px;width:6.0px;height:1.4px;background:#0000ff;opacity:0.6"></div>
<div class="r" style="left:2334.0px;top:187.2px;width:1.0px;height:1.4px;background:#000000;opacity:0.6"></div>
<div class="r" style="left:2336.0px;top:187.2px;width:4.0px;height:1.4px;background:#0000ff;opacity:0.6"></div>
<div class="r" style="left:2341.0px;top:187.2px;width:7.0px;height:1.4px;background:#000000;opacity:0.6"></div>
<div class="r" style="left:491px;top:1041px;width:1979px;height:361px;background:#fff"></div>
<div class="r" style="left:491px;top:1041px;width:1979px;height:2px;background:#e8e6e8"></div>
<div class="r" style="left:491px;top:1127px;width:1979px;height:1.5px;background:#ebe9ea"></div>
<div class="r" style="left:1009.5px;top:1043px;width:1px;height:84px;background:#ebe9ea"></div>
<div class="r" style="left:512px;top:1055px;width:158px;height:56px;border:1.5px solid #8c8686;border-radius:11px;background:#fff"></div>
<svg class="r" style="left:526px;top:1069px" width="30" height="30" viewBox="0 0 30 30" fill="none"><g stroke="#1a1a1a" stroke-width="1.7" fill="none"><rect x="2.85" y="2.95" width="23.3" height="22.8" rx="3"/><path d="M2.85 13.7 H26.15 M2.85 19.7 H26.15 M14.5 7.5 V25.75"/></g><path d="M2 5.5 Q2 2.1 5.5 2.1 H23.5 Q27 2.1 27 5.5 V7.6 H2 Z" fill="#1a1a1a"/></svg>
<div class="t" style="left:567.30px;top:1070.62px;font-size:22.8px;line-height:27.36px;color:#1a1a1a;font-weight:bold;font-family:'Liberation Sans', sans-serif;">Preview</div>
<div class="r" style="left:685px;top:1055px;width:162px;height:56px;border:1.5px solid #8c8686;border-radius:11px;background:#fff"></div>
<svg class="r" style="left:697px;top:1072px" width="32" height="24" viewBox="0 0 32 24" fill="none"><g stroke="#1a1a1a" stroke-width="1.6" fill="none"><path d="M9.1 5.8 L2.9 11.3 L9.1 16.9 M21.6 5.8 L27.8 11.3 L21.6 16.9 M18 3.6 L13.6 18.7"/></g></svg>
<div class="t" style="left:740.90px;top:1070.30px;font-size:22.6px;line-height:27.12px;color:#1a1a1a;font-weight:bold;font-family:'Liberation Sans', sans-serif;">Compile</div>
<div class="r" style="left:861px;top:1055px;width:127px;height:56px;border:1.5px solid #8c8686;border-radius:11px;background:#fff"></div>
<div class="r" style="left:931.7px;top:1055px;width:1.5px;height:56px;background:#8c8686"></div>
<div class="t" style="left:877.00px;top:1070.87px;font-size:22px;line-height:26.40px;color:#1a1a1a;font-weight:bold;font-family:'Liberation Sans', sans-serif;">Lint</div>
<svg class="r" style="left:949px;top:1075px" width="22" height="18" viewBox="0 0 22 18" fill="none"><path d="M3.5 4.5 L10.5 11.5 L17.5 4.5" stroke="#2a2a2a" stroke-width="1.7" fill="none"/></svg>
<div class="t" style="left:1069.20px;top:1071.25px;font-size:23.4px;line-height:28.08px;color:#1f1c1c;font-weight:normal;font-family:'Liberation Sans', sans-serif;-webkit-text-stroke:0.2px #1f1c1c">Results</div>
<div class="t" style="left:1206.60px;top:1070.58px;font-size:24.1px;line-height:28.92px;color:#1f1c1c;font-weight:normal;font-family:'Liberation Sans', sans-serif;-webkit-text-stroke:0.2px #1f1c1c">Compiled code</div>
<div class="r" style="left:1177px;top:1123.5px;width:221px;height:4px;background:#8f8a88"></div>
<div class="r" style="left:2218px;top:1055px;width:232px;height:57.5px;border:1.5px solid #8c8686;border-radius:12px;background:#fff"></div>
<svg class="r" style="left:2225px;top:1065px" width="40" height="35" viewBox="0 0 1602 1402" fill="none"><defs><linearGradient id="cg" gradientUnits="userSpaceOnUse" x1="760" y1="0" x2="1200" y2="0"><stop offset="0" stop-color="#e4571f"/><stop offset="1" stop-color="#5b2cf2"/></linearGradient></defs><g stroke-width="62" stroke-linecap="round" stroke-linejoin="round"><path stroke="#e8601f" d="M770 505 L560 390 Q480 330 400 360 Q330 400 370 500 Q500 700 490 740 Q480 790 380 950 Q330 1050 370 1110 Q430 1160 520 1110 L770 960"/><path stroke="url(#cg)" d="M770 505 L1060 350 Q1150 320 1200 380 Q1240 440 1180 560 Q1060 720 1070 760 Q1090 840 1200 970 Q1250 1060 1190 1110 Q1120 1160 1020 1110 L920 1050"/><path stroke="#e8601f" d="M770 505 Q600 610 610 760 Q630 880 760 920"/><path stroke="#c2493a" d="M900 610 Q980 740 920 840 Q870 910 770 960"/></g><path fill="#e8601f" d="M780 665 L805 710 L850 735 L805 760 L780 805 L755 760 L710 735 L755 710 Z"/></svg>
<div class="t" style="left:2271.60px;top:1071.84px;font-size:23.2px;line-height:27.84px;color:#141414;font-weight:bold;font-family:'Liberation Sans', sans-serif;">dbt Copilot</div>
<svg class="r" style="left:2410px;top:1073px" width="22" height="18" viewBox="0 0 22 18" fill="none"><path d="M5.1 7.1 L11.5 13.8 L17.8 6.6" stroke="#111" stroke-width="1.6" fill="none"/></svg>
<svg class="r" style="left:1446px;top:1186px" width="70" height="46" viewBox="0 0 70 46" fill="none"><g stroke="#6e6867" stroke-width="3.6" fill="none"><path d="M21 10.3 L8.6 22.2 L21 34.5 M48.3 10.3 L60.4 22.2 L48.3 34.5 M39.2 4.6 L29.8 40.2"/></g></svg>
<div class="t" style="left:481.00px;width:2000px;text-align:center;top:1268.39px;font-size:28px;line-height:33.60px;color:#4a4443;font-weight:bold;font-family:'Liberation Sans', sans-serif;">There&#x27;s nothing here.</div>
<div class="t" style="left:481.20px;width:2000px;text-align:center;top:1315.18px;font-size:25.9px;line-height:31.08px;color:#6f6968;font-weight:normal;font-family:'Liberation Sans', sans-serif;">Press Compile above to preview the SQL dbt will run against your warehouse.</div>
<div class="r" style="left:0px;top:1401px;width:2470px;height:1px;background:#e6e6e6"></div>
<div class="r" style="left:1447.3px;top:549.6px;width:808.2px;height:174.6px;border:5px solid #e83d24"></div>
<div class="r" style="left:2307.5px;top:54.4px;width:149px;height:97px;border:5px solid #e83d24"></div>
</body></html>
